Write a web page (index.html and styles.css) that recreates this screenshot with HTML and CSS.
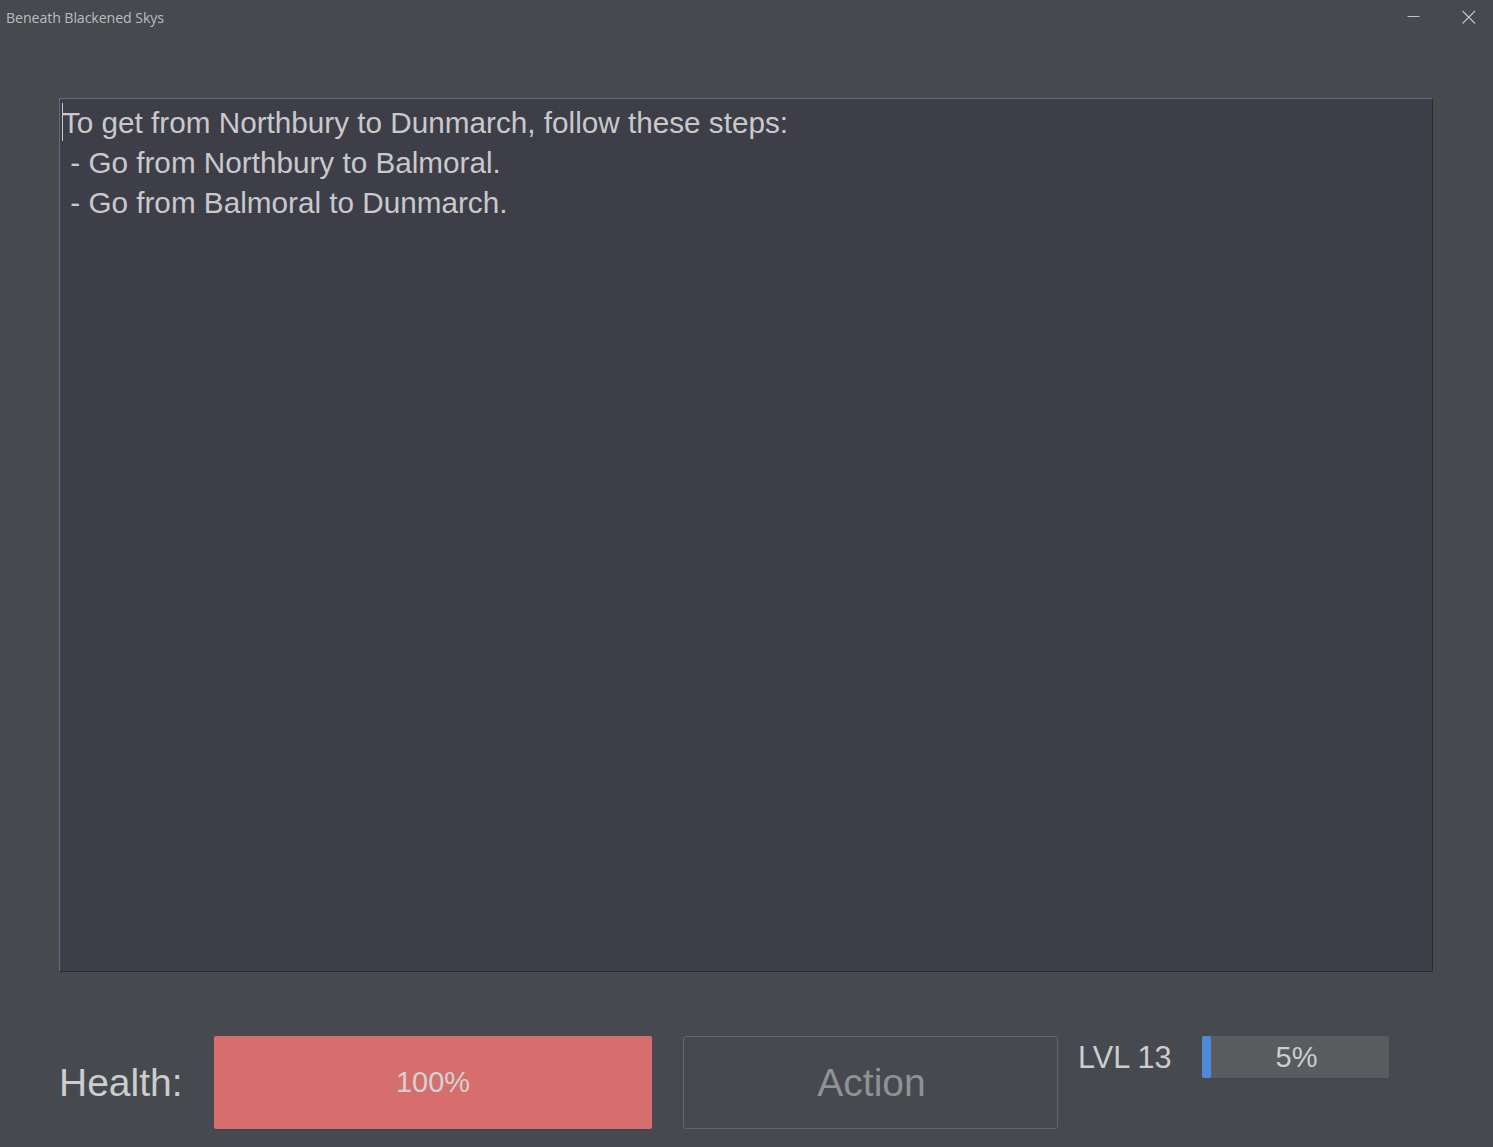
FILE: index.html
```html
<!DOCTYPE html>
<html>
<head>
<meta charset="utf-8">
<title>Beneath Blackened Skys</title>
<link rel="stylesheet" href="styles.css">
</head>
<body>
<div class="window">
  <header class="titlebar">
    <span class="title">Beneath Blackened Skys</span>
    <div class="controls">
      <svg class="ctl ctl-min" width="46" height="36" viewBox="0 0 46 36"><line x1="16.5" y1="16.5" x2="28.5" y2="16.5" stroke="#c4c4c4" stroke-width="1"/></svg>
      <svg class="ctl ctl-close" width="46" height="36" viewBox="0 0 46 36"><path d="M16.5 11 L29 23.5 M29 11 L16.5 23.5" stroke="#c4c4c4" stroke-width="1.1" fill="none"/></svg>
    </div>
  </header>
  <main class="content">
    <div class="textarea">
      <div class="line"><span class="caret"></span>To get from Northbury to Dunmarch, follow these steps:</div>
      <div class="line"> - Go from Northbury to Balmoral.</div>
      <div class="line"> - Go from Balmoral to Dunmarch.</div>
    </div>
    <div class="bottom">
      <div class="health-label">Health:</div>
      <div class="health-bar">100%</div>
      <div class="action">Action</div>
      <div class="level">
        <div class="lvl-label">LVL 13</div>
        <div class="xp-bar">
          <div class="xp-fill" style="width: 9px"></div>
          <span class="xp-text">5%</span>
        </div>
      </div>
    </div>
  </main>
</div>
</body>
</html>
```

FILE: styles.css
```css
html, body {
  margin: 0;
  padding: 0;
  background: #46494d;
}

.window {
  width: 1493px;
  height: 1147px;
  background: #46494d;
  display: flex;
  flex-direction: column;
  overflow: hidden;
}

.titlebar {
  height: 36px;
  display: flex;
  align-items: center;
  justify-content: space-between;
  padding-left: 6px;
}

.title {
  font-family: "Open Sans", "Noto Sans", sans-serif;
  font-size: 14.2px;
  color: #babdc0;
  letter-spacing: -0.1px;
  margin-top: -1px;
}

.controls {
  display: flex;
  align-self: flex-start;
  margin-right: 1px;
}

.ctl {
  display: block;
}

.ctl-min {
  margin-right: 9px;
}

.content {
  padding: 62px 60px 0 59px;
  display: flex;
  flex-direction: column;
}

.textarea {
  width: 1374px;
  height: 874px;
  box-sizing: border-box;
  background: #3d3e48;
  border-top: 1px solid #666980;
  border-left: 1px solid #666980;
  border-right: 1px solid #2a2b31;
  border-bottom: 1px solid #2a2b31;
  padding: 4px 0 0 2px;
  font-family: "Liberation Sans", Arial, sans-serif;
  font-size: 29.7px;
  line-height: 40px;
  color: #c9c9cb;
}

.line {
  white-space: pre;
  position: relative;
}

.caret {
  position: absolute;
  left: 0;
  top: 0;
  width: 1px;
  height: 38px;
  background: #c9c9cb;
}

.bottom {
  margin-top: 64px;
  height: 93px;
  display: flex;
  align-items: stretch;
}

.health-label {
  width: 155px;
  display: flex;
  align-items: center;
  font-family: "Liberation Sans", Arial, sans-serif;
  font-size: 39px;
  color: #cbcdcf;
  padding-top: 1px;
}

.health-bar {
  width: 438px;
  background: #d76e6e;
  border-radius: 2px;
  display: flex;
  align-items: center;
  justify-content: center;
  font-family: "Liberation Sans", Arial, sans-serif;
  font-size: 29px;
  color: #d2d2d2;
}

.action {
  margin-left: 31px;
  width: 375px;
  box-sizing: border-box;
  border: 1px solid #62666a;
  border-radius: 3px;
  display: flex;
  align-items: center;
  justify-content: center;
  font-family: "Liberation Sans", Arial, sans-serif;
  font-size: 39px;
  color: #8e9295;
  padding-top: 1px;
  padding-left: 2px;
}

.level {
  margin-left: 20px;
  display: flex;
  align-items: flex-start;
}

.lvl-label {
  width: 124px;
  height: 42px;
  display: flex;
  align-items: center;
  font-family: "Liberation Sans", Arial, sans-serif;
  font-size: 30.6px;
  color: #cbcdcf;
}

.xp-bar {
  position: relative;
  width: 187px;
  height: 42px;
  background: #585c5f;
  border-radius: 2px;
  display: flex;
  align-items: center;
  justify-content: center;
  font-family: "Liberation Sans", Arial, sans-serif;
  font-size: 29px;
  color: #cbcdcf;
}

.xp-fill {
  position: absolute;
  left: 0;
  top: 0;
  bottom: 0;
  background: #4c8ad8;
  border-radius: 2px;
}

.xp-text {
  position: relative;
  margin-left: 2px;
}
```
